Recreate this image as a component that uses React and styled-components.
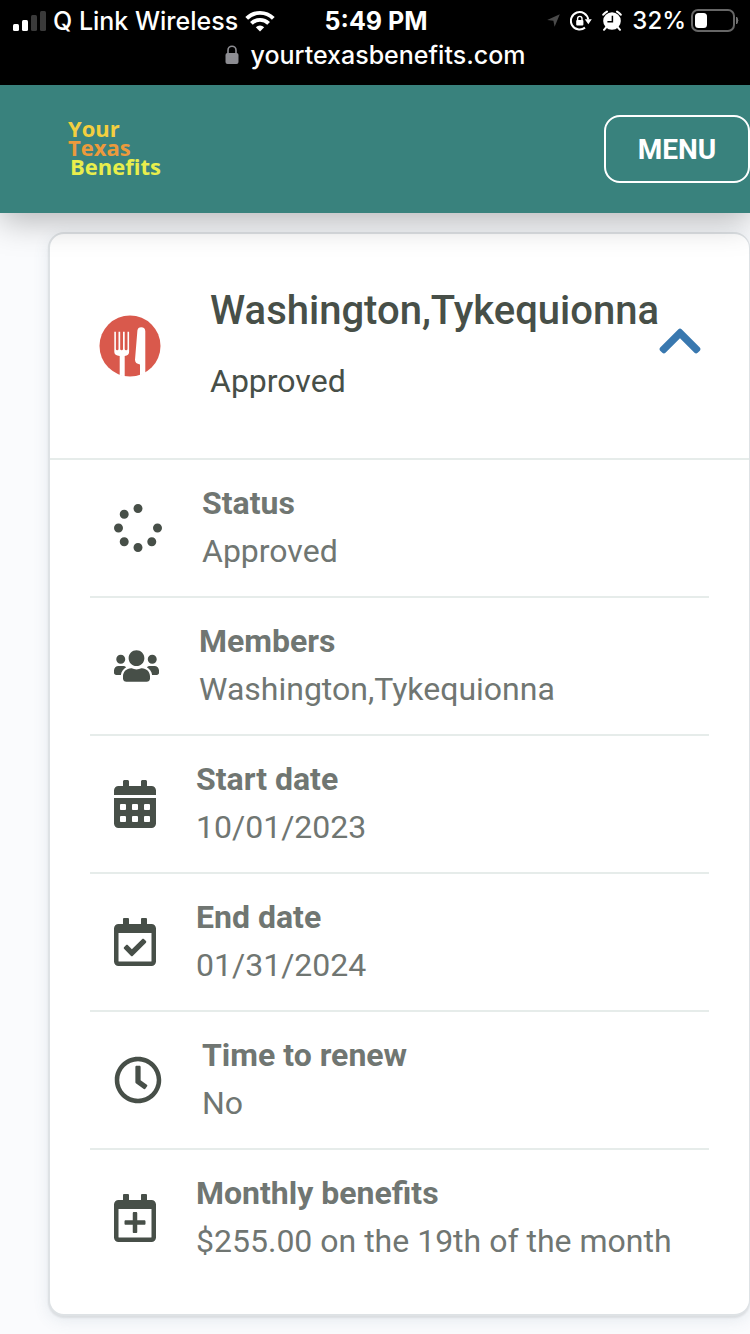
import React from "react";
import styled, { createGlobalStyle } from "styled-components";
import {
  FaSpinner,
  FaUsers,
  FaCalendarAlt,
  FaRegCalendarCheck,
  FaRegClock,
  FaRegCalendarPlus,
  FaChevronUp,
} from "react-icons/fa";

const GlobalStyle = createGlobalStyle`
  *, *::before, *::after { box-sizing: border-box; }
  body {
    margin: 0;
    background: #fafbfd;
    font-family: Roboto, "Liberation Sans", sans-serif;
    color: #474f48;
  }
  svg { display: block; flex: none; }
`;

const Page = styled.div`
  min-height: 100vh;
  padding-bottom: 18px;
`;

const PhoneBar = styled.div`
  background: #000;
  color: #fff;
  height: 85px;
  font-family: Inter, "Liberation Sans", sans-serif;
  font-size: 25px;
  font-weight: 500;
  line-height: 34px;
`;

const StatusLine = styled.div`
  display: grid;
  grid-template-columns: 1fr auto 1fr;
  align-items: center;
  height: 40px;
  padding: 1px 11px 0 13px;
`;

const StatusGroup = styled.div`
  display: flex;
  align-items: center;
  gap: ${(p) => p.$gap}px;
  justify-content: ${(p) => (p.$end ? "flex-end" : "flex-start")};
  white-space: nowrap;
`;

const Percent = styled.span`
  font-size: 24px;
`;

const Clock = styled.div`
  font-weight: 700;
`;

const AddressLine = styled.div`
  display: flex;
  align-items: center;
  justify-content: center;
  gap: 12px;
  height: 30px;
`;

const TopBar = styled.header`
  position: relative;
  z-index: 1;
  display: flex;
  align-items: center;
  justify-content: space-between;
  height: 128px;
  padding-left: 68px;
  background: #39827d;
  box-shadow: 0 8px 32px rgba(0, 0, 0, 0.28);
`;

const Logo = styled.a`
  display: flex;
  flex-direction: column;
  padding-bottom: 3px;
  text-decoration: none;
  font-family: "Open Sans", "Noto Sans", sans-serif;
  font-size: 22px;
  font-weight: 700;
  line-height: 19px;
`;

const LogoWord = styled.span`
  color: ${(p) => p.$color};
  padding-left: ${(p) => (p.$indent ? 2 : 0)}px;
`;

const MenuButton = styled.button`
  width: 146px;
  height: 68px;
  border: 2px solid #fff;
  border-radius: 16px;
  background: transparent;
  color: #fff;
  font: 700 28px Roboto, "Liberation Sans", sans-serif;
`;

const Card = styled.section`
  margin: 19px 0 0 48px;
  padding-bottom: 28px;
  border: 2px solid #dee2e5;
  border-right-width: 1px;
  border-radius: 16px;
  background: #fff;
  box-shadow: 0 2px 2px rgba(0, 0, 0, 0.08), 0 4px 16px rgba(70, 110, 130, 0.12);
`;

const CardHead = styled.div`
  display: flex;
  align-items: center;
  padding: 49px 48px 49px 49px;
  border-bottom: 2px solid #e6ecea;
`;

const Heading = styled.div`
  flex: 1;
  min-width: 0;
  margin-left: 49px;
  padding-bottom: 4px;
`;

const CaseName = styled.h2`
  margin: 0 0 18px;
  font-size: 40px;
  font-weight: 500;
  line-height: 56px;
  white-space: nowrap;
`;

const CaseState = styled.p`
  margin: 0;
  font-size: 32px;
  line-height: 48px;
`;

const ToggleButton = styled.button`
  padding: 0 0 10px;
  border: 0;
  background: transparent;
  color: #3978af;

  svg {
    width: 42px;
    height: 48px;
  }
`;

const Details = styled.dl`
  margin: 0 40px;
`;

const DetailRow = styled.div`
  display: flex;
  align-items: center;
  gap: 40px;
  padding: 19px 0 19px 24px;

  svg {
    width: ${(p) => p.$iconWidth}px;
    height: 48px;
  }

  & + & {
    border-top: 2px solid #e6ecea;
  }
`;

const DetailText = styled.div`
  padding-bottom: 2px;
  color: #707672;
  font-size: 32px;
  line-height: 48px;
`;

const Term = styled.dt`
  font-weight: 700;
`;

const Value = styled.dd`
  margin: 0;
`;

const details = [
  { Icon: FaSpinner, width: 48, term: "Status", value: "Approved" },
  { Icon: FaUsers, width: 45, term: "Members", value: "Washington,Tykequionna" },
  { Icon: FaCalendarAlt, width: 42, term: "Start date", value: "10/01/2023" },
  { Icon: FaRegCalendarCheck, width: 42, term: "End date", value: "01/31/2024" },
  { Icon: FaRegClock, width: 48, term: "Time to renew", value: "No" },
  { Icon: FaRegCalendarPlus, width: 42, term: "Monthly benefits", value: "$255.00 on the 19th of the month" },
];

const SignalIcon = () => (
  <svg width="33" height="20" viewBox="0 0 33 20">
    <rect x="0" y="13" width="6" height="7" rx="1.5" fill="#fff" />
    <rect x="9" y="9" width="6" height="11" rx="1.5" fill="#fff" />
    <rect x="18" y="4" width="6" height="16" rx="1.5" fill="#3a3a3a" />
    <rect x="27" y="0" width="6" height="20" rx="1.5" fill="#3a3a3a" />
  </svg>
);

const WifiIcon = () => (
  <svg width="30" height="22" viewBox="0 0 30 22" fill="none" stroke="#fff" strokeWidth="3.9">
    <path d="M1.7 8.4a18.8 18.8 0 0 1 26.6 0" />
    <path d="M6.4 13.4a12.2 12.2 0 0 1 17.2 0" />
    <path d="M15 21.6l-4.2-4.3a6 6 0 0 1 8.4 0z" fill="#fff" stroke="none" />
  </svg>
);

const LocationIcon = () => (
  <svg width="13" height="13" viewBox="0 0 13 13">
    <path d="M12.8 0.2L7.6 12.8 6.4 6.8 0.2 6z" fill="#4a4a4a" />
  </svg>
);

const RotationLockIcon = () => (
  <svg width="22" height="20" viewBox="0 0 22 20">
    <path d="M15 16.6A8.7 8.7 0 1 1 18.2 8.5" fill="none" stroke="#fff" strokeWidth="2" />
    <path d="M14.8 8.2h7l-3.5 5z" fill="#fff" />
    <rect x="6.2" y="9" width="7.2" height="5.6" rx="1" fill="#fff" />
    <path d="M7.6 9.4V7.6a2.2 2.2 0 0 1 4.4 0v1.8" fill="none" stroke="#fff" strokeWidth="1.4" />
  </svg>
);

const AlarmIcon = () => (
  <svg width="20" height="21" viewBox="0 0 20 21">
    <circle cx="10" cy="11" r="8.8" fill="#fff" />
    <path d="M1.3 4.6a12 12 0 0 1 3.6-3M18.7 4.6a12 12 0 0 0-3.6-3" fill="none" stroke="#fff" strokeWidth="2.2" strokeLinecap="round" />
    <path d="M4.4 17l-2.4 2.8M15.6 17l2.4 2.8" stroke="#fff" strokeWidth="2" strokeLinecap="round" />
    <path d="M10.4 5.8v6H5.4" fill="none" stroke="#000" strokeWidth="1.5" />
  </svg>
);

const BatteryIcon = () => (
  <svg width="48" height="24" viewBox="0 0 48 24">
    <rect x="1" y="1" width="42" height="21" rx="6" fill="none" stroke="#666" strokeWidth="2" />
    <path d="M45.6 8q2.6 3.5 0 7z" fill="#777" stroke="#777" />
    <rect x="4" y="4" width="12" height="15" rx="3.5" fill="#fff" />
  </svg>
);

const PadlockIcon = () => (
  <svg width="14" height="20" viewBox="0 0 14 20">
    <rect x="0.5" y="8" width="13" height="11" rx="2" fill="#8e8e93" />
    <path d="M3 9V5.2a4 4 0 0 1 8 0V9" fill="none" stroke="#8e8e93" strokeWidth="1.6" />
  </svg>
);

const MealIcon = () => (
  <svg width="62" height="62" viewBox="0 0 62 62">
    <defs>
      <clipPath id="plate">
        <circle cx="31" cy="31" r="31" />
      </clipPath>
    </defs>
    <circle cx="31" cy="31" r="30.5" fill="#d9594c" />
    <g fill="#fff" clipPath="url(#plate)">
      <path d="M15.3 16.8h1.6v17.1a1.3 1.3 0 0 0 2.6 0V16.8h1.7v17.1a1.4 1.4 0 0 0 2.8 0V16.8h1.7v17.1a1.4 1.4 0 0 0 2.8 0V16.8h1.6V37q0 3.4-4.4 4V62h-5V41q-5.4-.6-5.4-4z" />
      <path d="M38.4 15.6q.4-3.4 3.8-3.4 4 0 4.1 4V62H41V49.4q-5-.6-5-4.6z" />
    </g>
  </svg>
);

export default function App() {
  return (
    <Page>
      <GlobalStyle />
      <PhoneBar>
        <StatusLine>
          <StatusGroup $gap={7}>
            <SignalIcon />
            <span>Q Link Wireless</span>
            <WifiIcon />
          </StatusGroup>
          <Clock>5:49 PM</Clock>
          <StatusGroup $gap={10} $end>
            <LocationIcon />
            <RotationLockIcon />
            <AlarmIcon />
            <StatusGroup $gap={5}>
              <Percent>32%</Percent>
              <BatteryIcon />
            </StatusGroup>
          </StatusGroup>
        </StatusLine>
        <AddressLine>
          <PadlockIcon />
          <span>yourtexasbenefits.com</span>
        </AddressLine>
      </PhoneBar>

      <TopBar>
        <Logo href="#">
          <LogoWord $color="#f4cf3f">Your</LogoWord>
          <LogoWord $color="#ec9a3c">Texas</LogoWord>
          <LogoWord $color="#e9ee4c" $indent>Benefits</LogoWord>
        </Logo>
        <MenuButton type="button">MENU</MenuButton>
      </TopBar>

      <main>
        <Card>
          <CardHead>
            <MealIcon />
            <Heading>
              <CaseName>Washington,Tykequionna</CaseName>
              <CaseState>Approved</CaseState>
            </Heading>
            <ToggleButton type="button" aria-label="Collapse case details" aria-expanded="true">
              <FaChevronUp />
            </ToggleButton>
          </CardHead>
          <Details>
            {details.map(({ Icon, width, term, value }) => (
              <DetailRow key={term} $iconWidth={width}>
                <Icon aria-hidden="true" />
                <DetailText>
                  <Term>{term}</Term>
                  <Value>{value}</Value>
                </DetailText>
              </DetailRow>
            ))}
          </Details>
        </Card>
      </main>
    </Page>
  );
}
